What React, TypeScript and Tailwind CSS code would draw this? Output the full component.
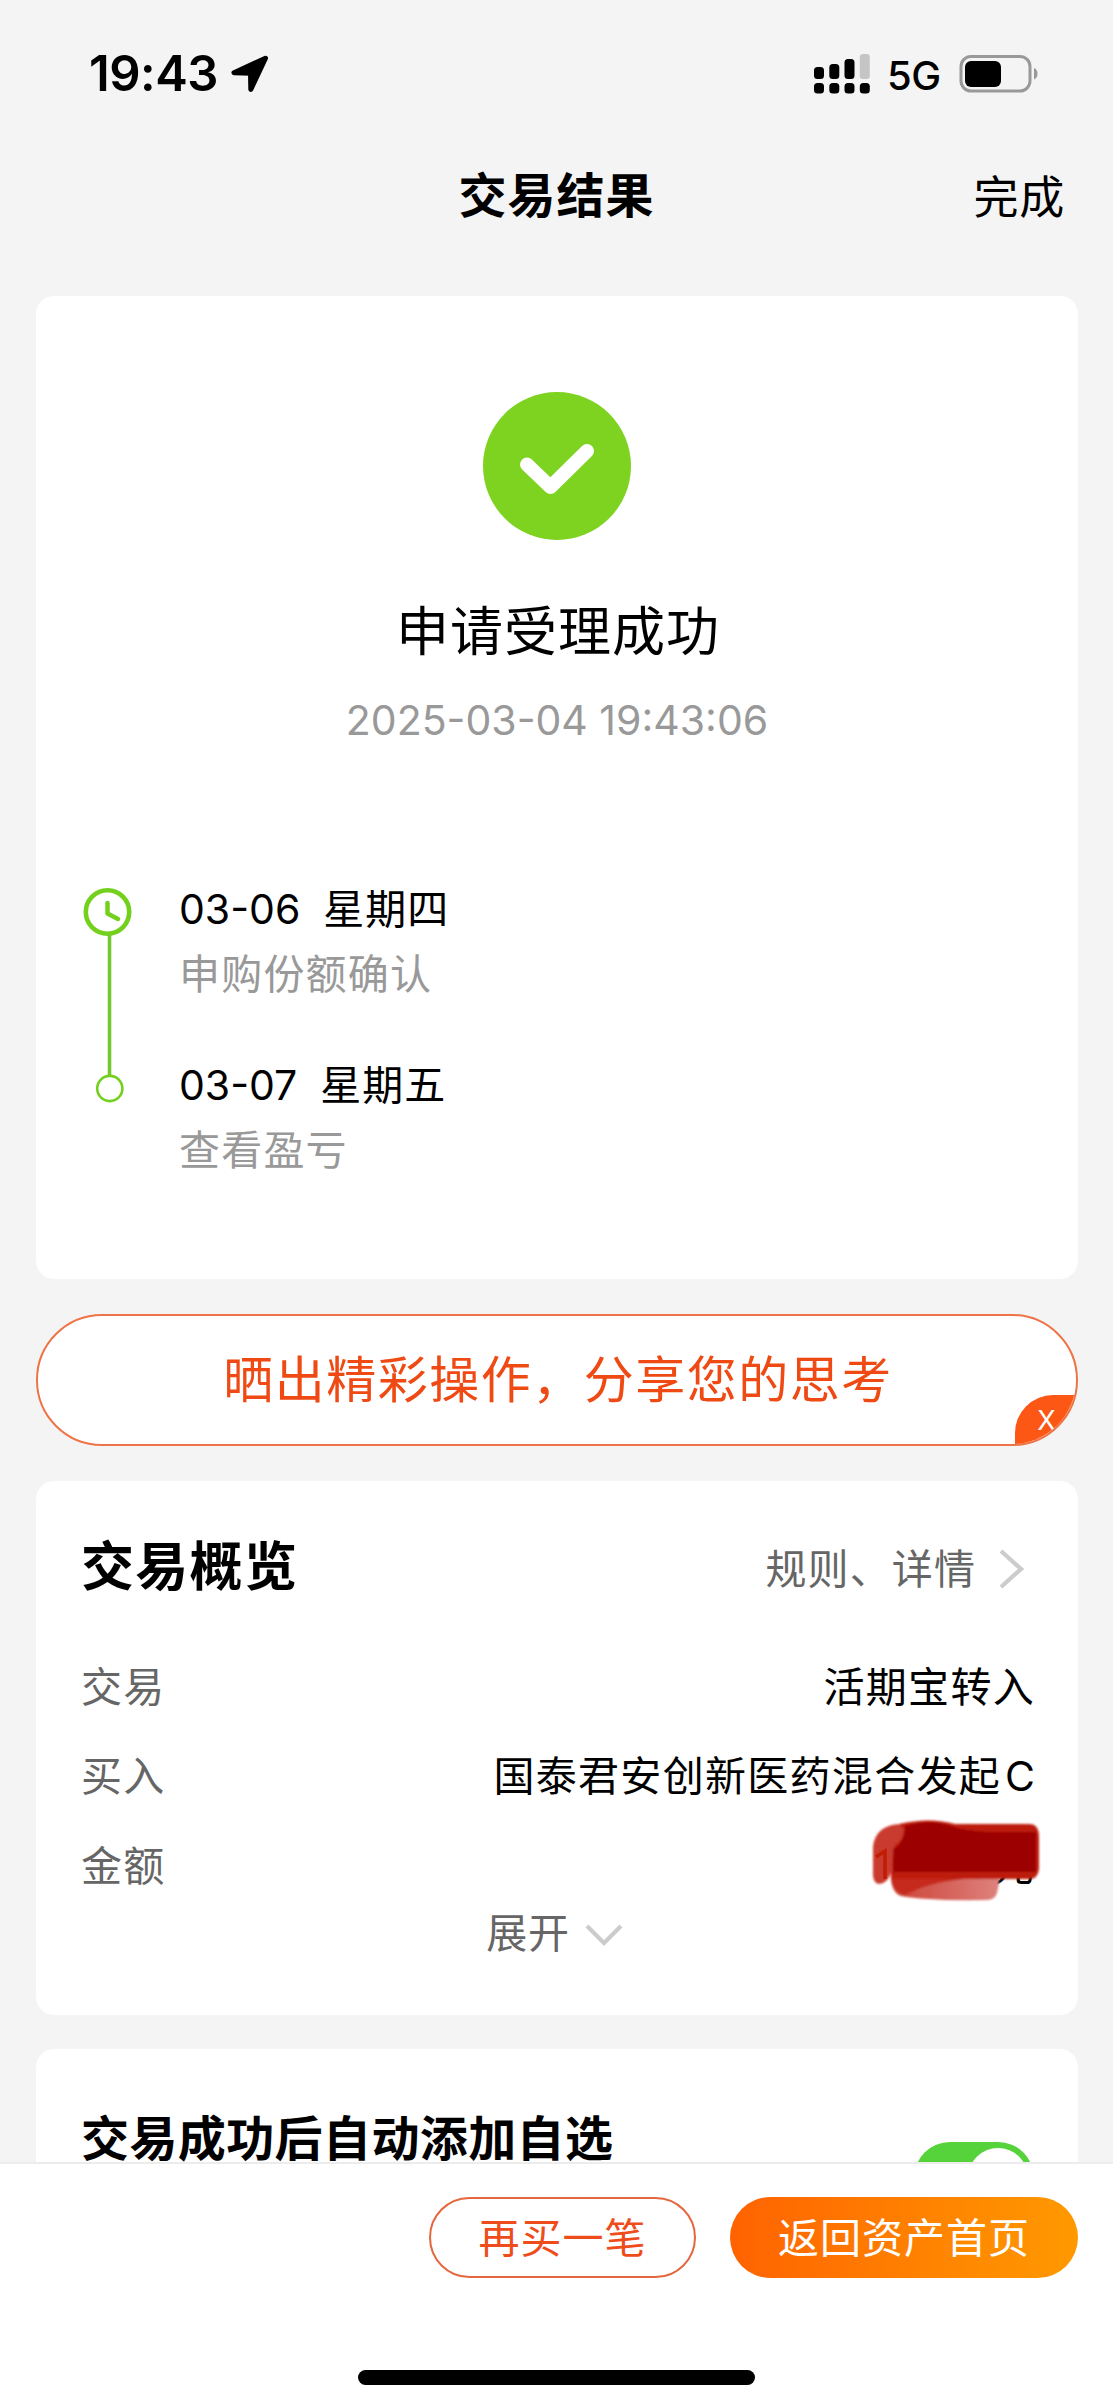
/**
 * Trade Result Page - 交易结果页
 *
 * 包含:状态栏 + 受理结果 + 分享入口 + 交易概览 + 底部操作
 */

import type { ReactNode } from 'react';

interface TimelineItem {
  date: string;
  weekday: string;
  desc: string;
}

const TIMELINE: TimelineItem[] = [
  { date: '03-06', weekday: '星期四', desc: '申购份额确认' },
  { date: '03-07', weekday: '星期五', desc: '查看盈亏' },
];

function StatusBar() {
  return (
    <div className="flex h-[148px] items-start justify-between pl-[89px] pr-[74px] pt-[44px]">
      <div className="flex h-[60px] items-center">
        <span className="w-[130px] whitespace-nowrap text-[49px] font-semibold leading-[60px] tracking-[-0.500px]">19:43</span>
        <svg className="ml-[12px] h-[38px] w-[38px]" viewBox="0 0 38 38">
          <path
            d="M34.500 3.200 3 17.800 19.500 18.200 19.800 34.500Z"
            fill="#000"
            stroke="#000"
            strokeWidth="5"
            strokeLinejoin="round"
          />
        </svg>
      </div>
      <div className="flex h-[60px] items-center">
        <svg className="h-[40px] w-[56px]" viewBox="0 0 56 40">
          <rect x="0" y="13" width="10" height="12" rx="3.5" />
          <rect x="15.3" y="10" width="10" height="15" rx="3.5" />
          <rect x="30.5" y="5" width="10" height="20" rx="3.5" />
          <rect x="45.8" y="0" width="10" height="25" rx="3" fill="#c5c5c5" />
          <rect x="0" y="29" width="10" height="10.5" rx="3.5" />
          <rect x="15.3" y="29" width="10" height="10.5" rx="3.5" />
          <rect x="30.5" y="29" width="10" height="10.5" rx="3.5" />
          <rect x="45.8" y="29" width="10" height="10.5" rx="3.5" />
        </svg>
        <span className="ml-[17px] w-[53px] pt-[3px] text-[40px] font-medium leading-[57px] tracking-[-0.500px]">5G</span>
        <svg className="ml-[19px] h-[38px] w-[80px]" viewBox="0 0 80 38">
          <rect x="2" y="1.5" width="69" height="34.5" rx="10" fill="none" stroke="#999" strokeWidth="3" />
          <rect x="6" y="6" width="36" height="26" rx="6" />
          <path d="M75 13v11.5c2.400-.8 3.500-3 3.500-5.700s-1.100-5-3.500-5.800z" fill="#999" />
        </svg>
      </div>
    </div>
  );
}

function NavBar() {
  return (
    <div className="grid h-[148px] grid-cols-3 items-start px-[48px]">
      <span />
      <h1 className="mt-[16px] text-center text-[48px] font-bold leading-[64px] tracking-[1px]">交易结果</h1>
      <button className="mt-[18px] text-right text-[45px] leading-[64px] tracking-[0.800px]">完成</button>
    </div>
  );
}

function ResultCard() {
  return (
    <section className="h-[983px] rounded-[18px] bg-white">
      <div className="flex flex-col items-center pt-[96px]">
        <svg className="h-[148px] w-[148px]" viewBox="0 0 148 148">
          <circle cx="74" cy="74" r="74" fill="#7ed321" />
          <path
            d="M44 72.500 67.500 95 104 59"
            fill="none"
            stroke="#fff"
            strokeWidth="14"
            strokeLinecap="round"
            strokeLinejoin="round"
          />
        </svg>
        <h2 className="mt-[57px] pl-[2px] text-[53px] leading-[70px] tracking-[1px]">申请受理成功</h2>
        <p className="mt-[25px] text-[41px] leading-[56px] text-[#999]">2025-03-04 19:43:06</p>
      </div>

      <div className="mt-[133px] flex pl-[47px]">
        <svg className="h-[230px] w-[50px]" viewBox="0 0 50 230">
          <circle cx="24.500" cy="31" r="21.700" fill="none" stroke="#73d01c" strokeWidth="4.600" />
          <path d="M24.500 22v10.500l10.500 5.500" fill="none" stroke="#73d01c" strokeWidth="4.500" strokeLinecap="round" strokeLinejoin="round" />
          <path d="M26.500 54v141" stroke="#73c92d" strokeWidth="3.600" />
          <circle cx="26.800" cy="207.500" r="12.600" fill="none" stroke="#73d01c" strokeWidth="2.600" />
        </svg>
        <div className="ml-[46px]">
          {TIMELINE.map((item) => (
            <div key={item.date} className="h-[176px]">
              <p className="flex gap-[23px] text-[41px] leading-[56px]">
                <span>{item.date}</span>
                <span className="tracking-[0.900px]">{item.weekday}</span>
              </p>
              <p className="mt-[9px] text-[41px] leading-[56px] tracking-[1.200px] text-[#999]">{item.desc}</p>
            </div>
          ))}
        </div>
      </div>
    </section>
  );
}

function ShareBanner() {
  return (
    <div className="relative mt-[35px] flex h-[132px] items-center justify-center overflow-hidden rounded-full border-2 border-[#ee7346] bg-white">
      <span className="pl-[2px] text-[50px] leading-[64px] tracking-[1.500px] text-[#f04a14]">晒出精彩操作，分享您的思考</span>
      <button className="absolute bottom-[-2px] right-[-2px] h-[51px] w-[63px] rounded-tl-[38px] bg-[#fc5714] text-[27px] leading-[50px] text-white">
        X
      </button>
    </div>
  );
}

function Row({ label, children }: { label: string; children: ReactNode }) {
  return (
    <div className="flex h-[89.500px] items-center justify-between text-[41px] leading-[56px] tracking-[1.300px]">
      <span className="text-[#666]">{label}</span>
      {children}
    </div>
  );
}

// 金额上的红色涂抹
function Scribble() {
  return (
    <svg className="absolute right-[-8px] top-[-21px] h-[90px] w-[176px]" viewBox="0 0 176 90">
      <defs>
        <filter id="soft" x="-5%" y="-10%" width="110%" height="120%">
          <feGaussianBlur stdDeviation="1.300" />
        </filter>
        <linearGradient id="tail" x1="0" x2="1" y1="0" y2="0">
          <stop offset="0" stopColor="#cc4236" />
          <stop offset="1" stopColor="#de817c" />
        </linearGradient>
      </defs>
      <g filter="url(#soft)">
        <path d="M24 50H130Q134 62 130 76Q128 83 120 83Q60 84 34 79Q22 75 24 50Z" fill="url(#tail)" />
        <path d="M24 50H126V61Q72 60 38 78Q22 74 24 50Z" fill="#c6291d" />
        <path d="M6 30Q8 8 34 7H60V54H24Q22 66 12 67Q5 66 6 54Z" fill="#c93a2d" />
        <path d="M32 7Q62 0 88 7H162Q172 7 172 20V52Q171 62 162 62H26Q24 40 28 28Q36 24 37 12Z" fill="#bd1a0a" />
        <path d="M38 9Q66 1 90 11Q110 16 140 15H169V55H26V32Q38 26 38 9Z" fill="#9c0200" />
      </g>
      <path d="M9 40 18 34V62" fill="none" stroke="#c21c05" strokeWidth="3.500" />
    </svg>
  );
}

function OverviewCard() {
  return (
    <section className="mt-[35px] h-[534px] rounded-[18px] bg-white pl-[45px] pr-[43px] pt-[51px]">
      <div className="flex h-[70px] items-center justify-between">
        <h2 className="text-[53px] font-bold leading-[70px] tracking-[1.300px]">交易概览</h2>
        <div className="flex items-center pr-[11px] pt-[4px] text-[#666]">
          <span className="text-[41px] leading-[56px] tracking-[1.100px]">规则、详情</span>
          <svg className="ml-[23px] h-[40px] w-[25px]" viewBox="0 0 25 40">
            <path d="M2 2 22 20 2 38" fill="none" stroke="#ccc" strokeWidth="4.200" />
          </svg>
        </div>
      </div>
      <div className="mt-[40px]">
        <Row label="交易">
          <span>活期宝转入</span>
        </Row>
        <Row label="买入">
          <span>
            国泰君安创新医药混合发起<span className="ml-[4px] tracking-normal">C</span>
          </span>
        </Row>
        <Row label="金额">
          <span className="relative">
            元
            <Scribble />
          </span>
        </Row>
      </div>
      <button className="mx-auto -mt-[6px] flex items-center pr-[7px] text-[41px] leading-[56px] tracking-[0.800px] text-[#666]">
        展开
        <svg className="ml-[15px] mt-[4px] h-[22px] w-[38px]" viewBox="0 0 38 22">
          <path d="M2 2 19 19 36 2" fill="none" stroke="#ccc" strokeWidth="4.200" />
        </svg>
      </button>
    </section>
  );
}

function AutoAddCard() {
  return (
    <section className="mt-[34px] flex h-[114px] items-start justify-between overflow-hidden rounded-t-[18px] bg-white pl-[45px] pr-[44px]">
      <h2 className="mt-[65px] text-[48px] font-bold leading-[49px] tracking-[0.400px]">交易成功后自动添加自选</h2>
      <div className="mt-[93px] flex h-[72px] w-[120px] shrink-0 justify-end rounded-full bg-[#56d23a] p-[6px]">
        <span className="h-[60px] w-[60px] rounded-full bg-white" />
      </div>
    </section>
  );
}

function BottomBar() {
  return (
    <footer className="h-[246px] border-t-2 border-[#ececec] bg-white">
      <div className="flex justify-end gap-[34px] pr-[35px] pt-[33px] text-[41px] leading-[56px] tracking-[1px]">
        <button className="h-[81px] w-[267px] rounded-full border-2 border-[#e5673f] text-[#ee4d1b]">再买一笔</button>
        <button className="h-[81px] w-[348px] rounded-full bg-linear-to-r from-[#ff6200] to-[#ff9900] text-white">返回资产首页</button>
      </div>
      <div className="mx-auto mt-[92px] h-[15px] w-[397px] rounded-full bg-black" />
    </footer>
  );
}

export default function App() {
  return (
    <div
      lang="zh-CN"
      className="flex h-[2408px] w-[1113px] flex-col overflow-hidden bg-[#f4f4f4] font-['Inter','Noto_Sans_CJK_SC',sans-serif] text-black"
    >
      <StatusBar />
      <NavBar />
      <main className="h-[1866px] pl-[36px] pr-[35px]">
        <ResultCard />
        <ShareBanner />
        <OverviewCard />
        <AutoAddCard />
      </main>
      <BottomBar />
    </div>
  );
}
